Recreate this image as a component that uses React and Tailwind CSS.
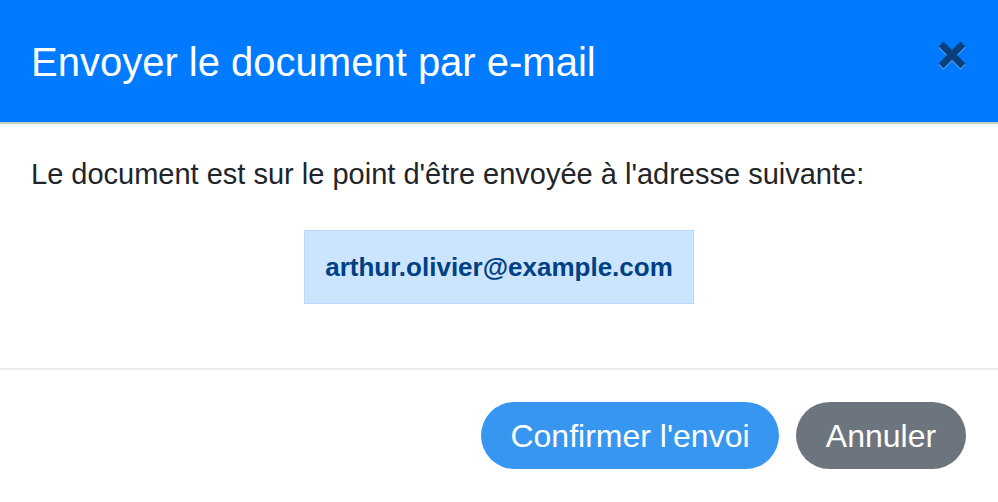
const CloseIcon = () => (
  <svg width="28" height="28" viewBox="0 0 28 28" className="drop-shadow-[0_1px_0_rgba(255,255,255,0.5)]">
    <path d="M3 3 L25 25 M25 3 L3 25" stroke="#0b3f7d" strokeWidth="7" strokeLinecap="butt" />
  </svg>
);

const App = () => {
  return (
    <div className="w-[998px] h-[502px] bg-white font-['Liberation_Sans',Arial,sans-serif] overflow-hidden">
      {/* Header */}
      <div className="h-[124px] bg-[#007bff] flex items-start justify-between pl-[31px] pr-[32px] pt-[42px] border-b-2 border-[#c8c8c8]">
        <h1 className="text-[40px] text-white leading-[40px]">Envoyer le document par e-mail</h1>
        <button className="-mt-[1px]">
          <CloseIcon />
        </button>
      </div>

      {/* Body */}
      <div className="px-[31px] pt-[33px] pb-[64px] border-b-2 border-[#e9ecef]">
        <p className="text-[29px] text-[#212529] leading-[34px]">
          Le document est sur le point d'être envoyée à l'adresse suivante:
        </p>
        <div className="flex justify-center mt-[39px]">
          <div className="w-[390px] h-[74px] bg-[#cce5ff] border border-[#b8daff] flex items-center justify-center">
            <span className="text-[26px] font-bold text-[#004085]">arthur.olivier@example.com</span>
          </div>
        </div>
      </div>

      {/* Footer */}
      <div className="flex justify-end gap-[17px] pr-[32px] pt-[32px]">
        <button className="h-[67px] w-[298px] rounded-[34px] bg-[#3797f0] text-white text-[32px]">
          Confirmer l'envoi
        </button>
        <button className="h-[67px] w-[170px] rounded-[34px] bg-[#6c757d] text-white text-[32px]">
          Annuler
        </button>
      </div>
    </div>
  );
};

export default App;
